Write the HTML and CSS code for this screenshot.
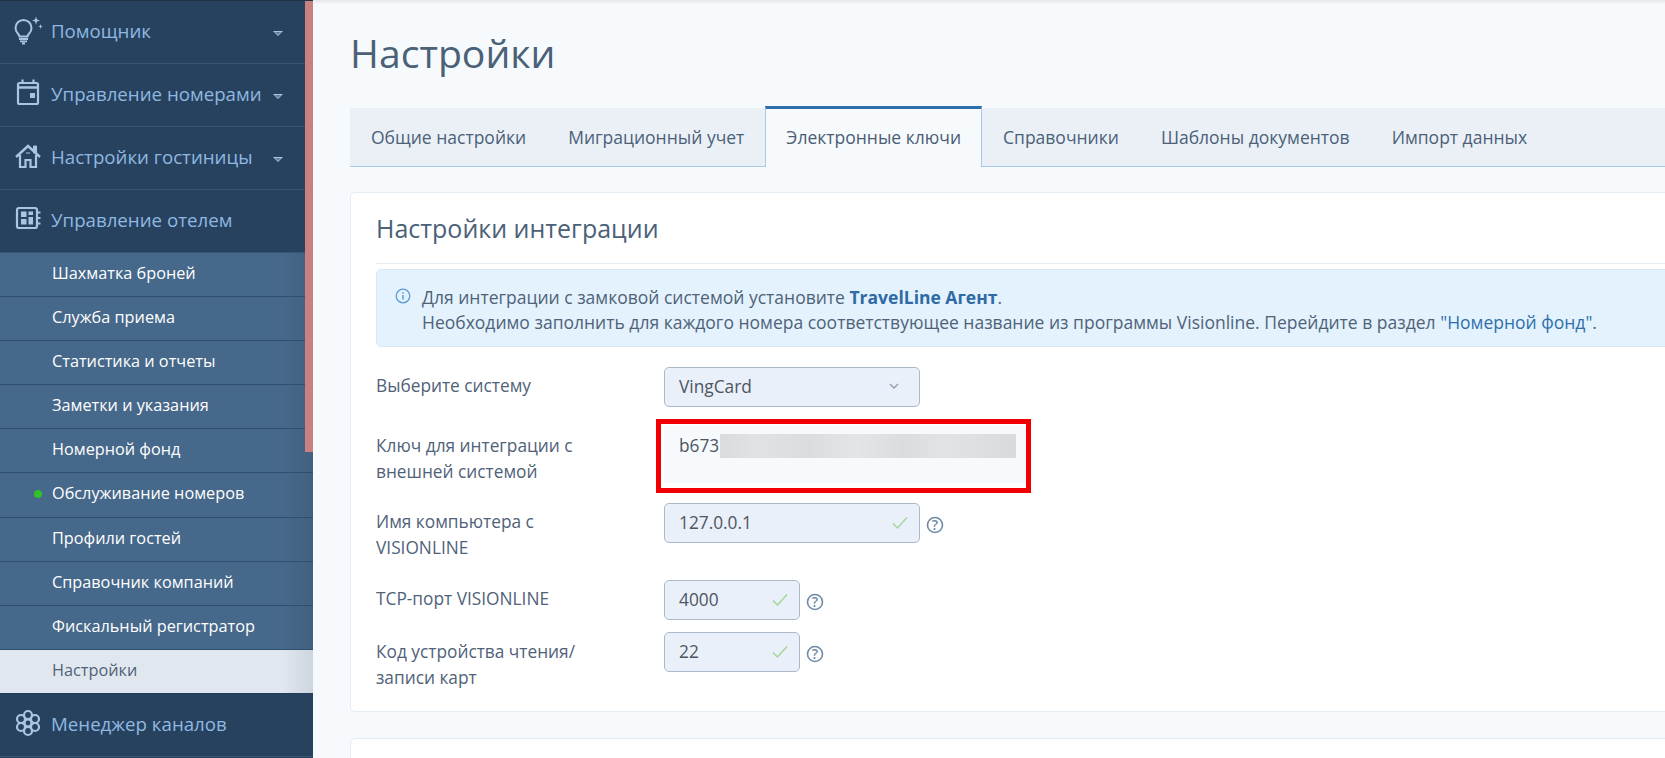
FILE: index.html
```html
<!DOCTYPE html>
<html lang="ru">
<head>
<meta charset="utf-8">
<title>Настройки</title>
<link rel="stylesheet" href="styles.css">
</head>
<body>
<div class="page">
  <nav class="sidebar">
    <div class="scrollbar"></div>
    <a class="nav-item">
      <svg class="nav-icon" viewBox="0 0 30 30"><path d="M5.500 20.500c0-2.500-4-3.600-4-8.600a8 8 0 0 1 16 0c0 5-4 6.100-4 8.600z" fill="none" stroke="currentColor" stroke-width="2"/><path d="M5 23h9M6 25.300h7M8 27.500h3" stroke="currentColor" stroke-width="1.800"/><path d="M22 .5l1 3 3 1-3 1-1 3-1-3-3-1 3-1zM26.500 8l.6 1.900 1.900.6-1.900.6-.6 1.900-.6-1.900-1.900-.6 1.900-.6z" fill="currentColor"/></svg>
      <span class="nav-text">Помощник</span><i class="caret"></i>
    </a>
    <a class="nav-item">
      <svg class="nav-icon" viewBox="0 0 30 30"><rect x="4" y="4" width="20" height="21" rx="1.500" fill="none" stroke="currentColor" stroke-width="2.200"/><path d="M4 8.500h20" stroke="currentColor" stroke-width="2.500"/><path d="M8.500 .5v4M19.500 .5v4" stroke="currentColor" stroke-width="2.200"/><rect x="16" y="14" width="5" height="5" fill="currentColor"/></svg>
      <span class="nav-text">Управление номерами</span><i class="caret"></i>
    </a>
    <a class="nav-item">
      <svg class="nav-icon" viewBox="0 0 30 30"><path d="M2 15L14 4l12 11" fill="none" stroke="currentColor" stroke-width="2.400"/><path d="M6 13v12h5.500v-7h5v7H22V13" fill="none" stroke="currentColor" stroke-width="2.200"/><path d="M19.500 4h3v7h-3zM12 11h4" fill="currentColor" stroke="currentColor" stroke-width="1"/></svg>
      <span class="nav-text">Настройки гостиницы</span><i class="caret"></i>
    </a>
    <a class="nav-item">
      <svg class="nav-icon" viewBox="0 0 30 30"><rect x="3" y="3" width="20" height="20" rx="2" fill="none" stroke="currentColor" stroke-width="2.200"/><path d="M7 6.500h5.500V12H7zM14.500 6.500H19V10h-4.500zM7 14h5.500v5.500H7zM14.500 12H19v7.500h-4.500z" fill="currentColor"/><path d="M23 7.500h3.500M23 13h3.500M23 18.500h3.500" stroke="currentColor" stroke-width="2"/></svg>
      <span class="nav-text">Управление отелем</span>
    </a>
    <ul class="subnav">
      <li class="sub-item">Шахматка броней</li>
      <li class="sub-item">Служба приема</li>
      <li class="sub-item">Статистика и отчеты</li>
      <li class="sub-item">Заметки и указания</li>
      <li class="sub-item">Номерной фонд</li>
      <li class="sub-item sub-dot">Обслуживание номеров</li>
      <li class="sub-item">Профили гостей</li>
      <li class="sub-item">Справочник компаний</li>
      <li class="sub-item">Фискальный регистратор</li>
      <li class="sub-item sub-active">Настройки</li>
    </ul>
    <a class="nav-item">
      <svg class="nav-icon" viewBox="0 0 30 30"><g fill="none" stroke="currentColor" stroke-width="2.200"><circle cx="14" cy="6" r="4"/><circle cx="14" cy="22" r="4"/><circle cx="7" cy="10" r="4"/><circle cx="21" cy="10" r="4"/><circle cx="7" cy="18" r="4"/><circle cx="21" cy="18" r="4"/><circle cx="14" cy="14" r="3.500"/></g></svg>
      <span class="nav-text">Менеджер каналов</span>
    </a>
  </nav>

  <main class="main">
    <h1 class="title">Настройки</h1>
    <div class="tabs">
      <a class="tab">Общие настройки</a>
      <a class="tab">Миграционный учет</a>
      <a class="tab tab-active">Электронные ключи</a>
      <a class="tab">Справочники</a>
      <a class="tab">Шаблоны документов</a>
      <a class="tab">Импорт данных</a>
    </div>

    <section class="card">
      <h2 class="card-title">Настройки интеграции</h2>
      <div class="alert">
        <svg class="alert-icon" viewBox="0 0 16 16"><circle cx="8" cy="8" r="6.800" fill="none" stroke="currentColor" stroke-width="1.300"/><path d="M8 7v4.500" stroke="currentColor" stroke-width="1.500"/><circle cx="8" cy="4.800" r=".9" fill="currentColor"/></svg>
        <p class="alert-text">Для интеграции с замковой системой установите <b class="alert-strong">TravelLine Агент</b>.<br>Необходимо заполнить для каждого номера соответствующее название из программы Visionline. Перейдите в раздел <a class="alert-link">"Номерной фонд"</a>.</p>
      </div>

      <div class="form">
        <div class="row row-select">
          <div class="label">Выберите систему</div>
          <div class="control control-wide">VingCard
            <svg class="chevron" viewBox="0 0 10 6"><path d="M1 1l4 4 4-4" fill="none" stroke="currentColor" stroke-width="1.300"/></svg>
          </div>
        </div>
        <div class="row row-key">
          <div class="label label-key">Ключ для интеграции с внешней системой</div>
          <div class="key-value">b673<span class="redacted"></span></div>
          <div class="highlight"></div>
        </div>
        <div class="row row-host">
          <div class="label">Имя компьютера с VISIONLINE</div>
          <div class="control control-wide">127.0.0.1
            <svg class="check" viewBox="0 0 16 14"><path d="M1 7.500l4.500 4.500L15 1.500" fill="none" stroke="currentColor" stroke-width="1.500"/></svg>
          </div>
          <svg class="help" viewBox="0 0 18 18"><circle cx="9" cy="9" r="7.500" fill="none" stroke="currentColor" stroke-width="1.600"/><text class="help-mark" x="9" y="13.500" text-anchor="middle">?</text></svg>
        </div>
        <div class="row row-port">
          <div class="label">TCP-порт VISIONLINE</div>
          <div class="control control-small">4000
            <svg class="check" viewBox="0 0 16 14"><path d="M1 7.500l4.500 4.500L15 1.500" fill="none" stroke="currentColor" stroke-width="1.500"/></svg>
          </div>
          <svg class="help" viewBox="0 0 18 18"><circle cx="9" cy="9" r="7.500" fill="none" stroke="currentColor" stroke-width="1.600"/><text class="help-mark" x="9" y="13.500" text-anchor="middle">?</text></svg>
        </div>
        <div class="row row-code">
          <div class="label label-code">Код устройства чтения/<br>записи карт</div>
          <div class="control control-small">22
            <svg class="check" viewBox="0 0 16 14"><path d="M1 7.500l4.500 4.500L15 1.500" fill="none" stroke="currentColor" stroke-width="1.500"/></svg>
          </div>
          <svg class="help" viewBox="0 0 18 18"><circle cx="9" cy="9" r="7.500" fill="none" stroke="currentColor" stroke-width="1.600"/><text class="help-mark" x="9" y="13.500" text-anchor="middle">?</text></svg>
        </div>
      </div>
    </section>
    <section class="card card-next"></section>
  </main>
</div>
</body>
</html>
```

FILE: styles.css
```css
* { box-sizing: border-box; }
html, body { margin: 0; height: 100%; overflow: hidden; }
body { font-family: "Open Sans", "Noto Sans", sans-serif; background: #f7fafd; color: #4a5d73; }
.page { display: flex; height: 758px; overflow: hidden; }

.sidebar { position: relative; flex: none; width: 313px; height: 758px; background: #27425f; border-top: 1px solid #1f3347; }
.scrollbar { position: absolute; top: 0; right: 0; width: 8px; height: 451px; background: #c98080; z-index: 2; }
.nav-item { display: flex; align-items: center; height: 63px; padding: 0 0 2px 14px; border-bottom: 1px solid #365473; color: #8fb8e0; }
.nav-icon { flex: none; width: 30px; height: 30px; margin-right: 7px; color: #a7c6e3; }
.nav-text { flex: none; font-size: 18.700px; line-height: 24px; width: 222px; white-space: nowrap; }
.caret { position: relative; display: block; width: 0; height: 0; margin-top: 5px; border-left: 5px solid transparent; border-right: 5px solid transparent; border-top: 5px solid #a7c6e3; }
.caret::after { content: ""; position: absolute; left: -3px; top: -4px; width: 0; height: 0; border-left: 3px solid transparent; border-right: 3px solid transparent; border-top: 3px solid #5f7f9f; }

.subnav { list-style: none; margin: 0; padding: 0; background: linear-gradient(90deg, #46688a 90%, #41617f 100%); }
.sub-item { position: relative; height: 44.100px; padding-left: 52px; border-bottom: 1px solid #2f4f70; color: #fff; font-size: 16.250px; line-height: 40px; white-space: nowrap; }
.sub-dot::before { content: ""; position: absolute; left: 34px; top: 17px; width: 8px; height: 8px; border-radius: 50%; background: #33c02a; }
.sub-active { background: linear-gradient(90deg, #e1e7ee 90%, #cdd5de 100%); color: #4f6278; border-bottom-color: #1f3d5c; }

.main { flex: none; width: 1500px; padding: 0 0 0 37px; background: #f7fafd; background-image: linear-gradient(180deg, #e4e6e9 0, #f7fafd 4px); }
.title { margin: 24px 0 0; height: 84px; font-size: 39.200px; line-height: 58px; font-weight: 400; color: #4a6178; }
.tabs { display: flex; height: 59px; background: #ebf0f7; border-bottom: 1px solid #a9c9e8; }
.tab { height: 58px; padding: 0 21px; font-size: 17.500px; line-height: 58px; color: #4a6178; white-space: nowrap; }
.tab-active { height: 61px; margin-top: -2px; background: #f7fafd; border: 1px solid #a9c9e8; border-top: 3px solid #2f6fab; border-bottom: 0; padding: 0 20px; line-height: 56px; color: #4a5d73; }

.card { margin-top: 25px; padding: 0 25px; height: 520px; background: #fff; border: 1px solid #e3ebf3; border-radius: 5px; }
.card-next { height: 60px; margin-top: 26px; }
.card-title { margin: 0; height: 71px; border-bottom: 1px solid #e3ebf3; font-size: 25px; line-height: 71px; font-weight: 400; color: #4a6178; }
.alert { display: flex; height: 78px; margin-top: 5px; padding: 15px 0 0 18px; background: #e3f2fd; border: 1px solid #d6e8f6; border-radius: 5px; }
.alert-icon { flex: none; width: 16px; height: 16px; margin: 3px 11px 0 0; color: #5b9bd5; }
.alert-text { margin: 0; font-size: 17.500px; line-height: 25px; color: #4f6278; white-space: nowrap; }
.alert-strong { font-weight: 700; color: #2f6aa5; }
.alert-link { color: #2f6fab; }

.form { margin-top: 20px; }
.row { position: relative; display: flex; align-items: flex-start; }
.row-select { height: 40px; margin-bottom: 19px; }
.row-key { height: 57px; margin-bottom: 20px; }
.row-host { height: 57px; margin-bottom: 20px; }
.row-port { height: 40px; margin-bottom: 12px; }
.row-code { height: 40px; }
.label { flex: none; width: 288px; padding: 6px 60px 0 0; font-size: 17.300px; line-height: 26px; color: #4f6278; }
.label-key { padding-top: 7px; }
.label-code { padding-top: 7px; }
.control { position: relative; flex: none; height: 40px; padding-left: 14px; background: #e9f0f9; border: 1px solid #aab8ca; border-radius: 5px; font-size: 17.300px; line-height: 37px; color: #4d5561; }
.control-wide { width: 256px; }
.control-small { width: 136px; }
.chevron { position: absolute; right: 20px; top: 15px; width: 10px; height: 6px; color: #8b9bad; }
.check { position: absolute; right: 11px; top: 12px; width: 16px; height: 14px; color: #a5d69b; }
.help { flex: none; width: 18px; height: 18px; margin: 13px 0 0 6px; color: #6f8aa6; }
.help-mark { font-family: "Open Sans", sans-serif; font-size: 14px; font-weight: 600; fill: currentColor; }
.key-value { position: relative; flex: none; width: 366px; height: 57px; padding: 0 0 0 15px; background: #f7fafd; font-size: 17.300px; line-height: 40px; color: #4d5561; }
.redacted { position: absolute; left: 56px; top: 8px; width: 296px; height: 24px; background: linear-gradient(90deg, #d9dbdc 0, #e0e2e3 12%, #dadcdd 30%, #e3e5e6 46%, #dadcdd 62%, #e1e3e4 76%, #d8dadb 100%); }
.highlight { position: absolute; left: 280px; top: -7px; width: 375px; height: 74px; border: 5px solid #f00000; }
```
